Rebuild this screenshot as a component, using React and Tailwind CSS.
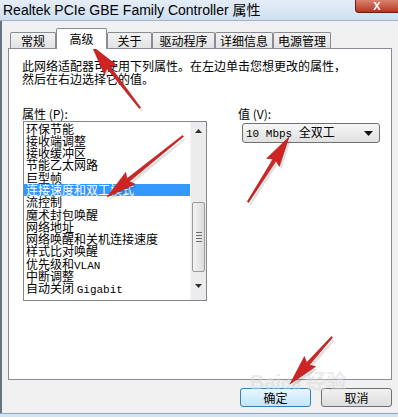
import React from "react";

const tabs = [
  { label: "常规", w: "w-[46px]" },
  { label: "高级", w: "w-[51px]", active: true },
  { label: "关于", w: "w-[45px]" },
  { label: "驱动程序", w: "w-[63px]" },
  { label: "详细信息", w: "w-[58px]" },
  { label: "电源管理", w: "w-[58px]" },
];

const items = [
  ["环保节能"],
  ["接收端调整"],
  ["接收缓冲区"],
  ["节能乙太网路"],
  ["巨型帧"],
  ["连接速度和双工模式"],
  ["流控制"],
  ["魔术封包唤醒"],
  ["网络地址"],
  ["网络唤醒和关机连接速度"],
  ["样式比对唤醒"],
  ["优先级和", "VLAN"],
  ["中断调整"],
  ["自动关闭 ", "Gigabit"],
];

const SELECTED = 5;

// points for a tapered arrow from tail to tip
const arrowPoints = (x1, y1, x2, y2) => {
  const L = 27;
  const W = 15;
  const s0 = 1.6;
  const s1 = 3.6;
  const dx = x2 - x1;
  const dy = y2 - y1;
  const len = Math.hypot(dx, dy);
  const ux = dx / len;
  const uy = dy / len;
  const nx = -uy;
  const ny = ux;
  const bx = x2 - ux * L;
  const by = y2 - uy * L;
  const pts = [
    [x1 + (nx * s0) / 2, y1 + (ny * s0) / 2],
    [bx + (nx * s1) / 2, by + (ny * s1) / 2],
    [bx - ux * 3 + (nx * W) / 2, by - uy * 3 + (ny * W) / 2],
    [x2, y2],
    [bx - ux * 3 - (nx * W) / 2, by - uy * 3 - (ny * W) / 2],
    [bx - (nx * s1) / 2, by - (ny * s1) / 2],
    [x1 - (nx * s0) / 2, y1 - (ny * s0) / 2],
  ];
  return pts.map((p) => p.map((v) => v.toFixed(1)).join(",")).join(" ");
};

const arrows = [
  [140, 108, 92, 46],
  [183, 136, 107, 197],
  [248, 202, 289, 137],
  [332, 337, 290, 384],
];

function Triangle({ up }) {
  return (
    <svg width="7" height="4" viewBox="0 0 7 4">
      <path d={up ? "M0 4 L3.5 0 L7 4 Z" : "M0 0 L3.5 4 L7 0 Z"} fill="#303030" />
    </svg>
  );
}

function PropertiesDialog() {
  return (
    <div className="w-[398px] h-[417px] relative overflow-hidden bg-[#f0f0f0] flex flex-col font-['Noto_Sans_CJK_SC',sans-serif] text-black">
      {/* title bar */}
      <div className="h-[21px] flex justify-between bg-gradient-to-b from-[#e4edf7] to-[#cfdff0] border-b border-[#9fb3c8]">
        <span className="pl-[3px] pt-[1px] text-[14px] leading-[18px] font-['Liberation_Sans','Noto_Sans_CJK_SC',sans-serif]">
          Realtek PCIe GBE Family Controller 属性
        </span>
        <div className="w-[43px] h-[13px] rounded-bl-[4px] border border-t-0 border-r-0 border-[#6b1d12] bg-gradient-to-b from-[#d9836f] to-[#b5321d] flex justify-center items-end overflow-hidden">
          <span className="text-white text-[11px] leading-[11px] font-bold font-['Liberation_Sans',sans-serif]">X</span>
        </div>
      </div>

      <div className="flex-1 flex flex-col border-l-2 border-[#66727f] pl-[6px] pr-[6px]">
        {/* tabs */}
        <div className="h-[27px] flex items-end pl-[2px]">
          {tabs.map((t) =>
            t.active ? (
              <div
                key={t.label}
                className={`${t.w} h-[21px] -mb-px relative z-10 bg-white border border-b-0 border-[#898c95] rounded-t-[2px] flex justify-center pt-[2px] text-[12px] leading-[16px]`}
              >
                {t.label}
              </div>
            ) : (
              <div
                key={t.label}
                className={`${t.w} h-[16px] bg-gradient-to-b from-[#f2f2f2] to-[#e3e3e3] border border-b-0 border-[#898c95] rounded-t-[2px] flex justify-center text-[12px] leading-[15px]`}
              >
                {t.label}
              </div>
            )
          )}
        </div>

        {/* tab panel */}
        <div className="h-[332px] bg-white border border-[#898c95] px-[13px] pt-[10px]">
          <div className="text-[12px] leading-[13px]">
            <div>此网络适配器可使用下列属性。在左边单击您想更改的属性，</div>
            <div>然后在右边选择它的值。</div>
          </div>

          <div className="flex mt-[22px]">
            <div className="w-[185px]">
              <div className="text-[12px] leading-[13px]">属性 (P):</div>
              <div className="mt-[1px] ml-[1px] w-[184px] h-[180px] border border-[#828790] flex">
                <div className="flex-1 pt-[0.5px]">
                  {items.map((it, i) => (
                    <div
                      key={i}
                      className={`pl-[2px] text-[12px] leading-[12.3px] h-[12.3px] whitespace-nowrap ${
                        i === SELECTED ? "bg-[#3399ff] text-white" : ""
                      }`}
                    >
                      {it[0]}
                      {it[1] && (
                        <span className="font-['Liberation_Mono',monospace] text-[11px]">{it[1]}</span>
                      )}
                    </div>
                  ))}
                </div>
                <div className="w-[16px] bg-[#ececec] border-l border-[#f8f8f8] flex flex-col">
                  <div className="h-[17px] flex items-center justify-center">
                    <Triangle up />
                  </div>
                  <div className="h-[63px]" />
                  <div className="h-[70px] mx-[1px] rounded-[2px] border border-[#9a9a9a] bg-gradient-to-r from-[#f3f3f3] to-[#dcdcdc] flex flex-col items-center justify-center gap-[2px]">
                    <div className="w-[6px] h-px bg-[#6f6f6f]" />
                    <div className="w-[6px] h-px bg-[#6f6f6f]" />
                    <div className="w-[6px] h-px bg-[#6f6f6f]" />
                    <div className="w-[6px] h-px bg-[#6f6f6f]" />
                  </div>
                  <div className="flex-1 flex items-center justify-center">
                    <Triangle />
                  </div>
                </div>
              </div>
            </div>

            <div className="ml-[31px] flex flex-col">
              <div className="text-[12px] leading-[13px]">值 (V):</div>
              <div className="mt-[3px] ml-[4px] w-[138px] h-[20px] rounded-[3px] border border-[#707070] bg-gradient-to-b from-[#f6f6f6] to-[#e0e0e0] flex items-center justify-between pl-[3px] pr-[6px]">
                <span className="text-[12px] leading-[16px] whitespace-nowrap">
                  <span className="font-['Liberation_Mono',monospace] text-[11px]">10 Mbps </span>
                  全双工
                </span>
                <svg width="9" height="5" viewBox="0 0 9 5">
                  <path d="M0 0 L4.5 5 L9 0 Z" fill="#111" />
                </svg>
              </div>
            </div>
          </div>
        </div>

        {/* buttons */}
        <div className="flex justify-end gap-[10px] pt-[8px] h-[33px]">
          <button className="w-[71px] h-[19px] rounded-[3px] border border-[#3c7fb1] bg-gradient-to-b from-[#eaf6fd] to-[#bee6fd] text-[12px] leading-[16px]">
            确定
          </button>
          <button className="w-[71px] h-[19px] rounded-[3px] border border-[#707070] bg-gradient-to-b from-[#f2f2f2] to-[#dddddd] text-[12px] leading-[16px]">
            取消
          </button>
        </div>
      </div>

      <div className="h-[4px] border-t border-[#8fa6bf] bg-[#d4e3f2]" />

      {/* baidu watermark */}
      <div className="absolute left-[250px] top-[372px] text-[20px] leading-[20px] font-bold text-[#dadada] opacity-50 font-['Liberation_Sans','Noto_Sans_CJK_SC',sans-serif] pointer-events-none">
        Bai<span className="text-[16px]">du</span> 经验
      </div>

      {/* annotation arrows */}
      <svg className="absolute inset-0 pointer-events-none" width="398" height="417">
        {arrows.map((a, i) => (
          <g key={i}>
            <polygon
              points={arrowPoints(a[0] + 2, a[1] + 3, a[2] + 2, a[3] + 3)}
              fill="#000"
              opacity="0.12"
            />
            <polygon points={arrowPoints(a[0], a[1], a[2], a[3])} fill="#cf2424" stroke="#a81818" strokeWidth="0.6" />
          </g>
        ))}
      </svg>
    </div>
  );
}

export default function App() {
  return <PropertiesDialog />;
}
